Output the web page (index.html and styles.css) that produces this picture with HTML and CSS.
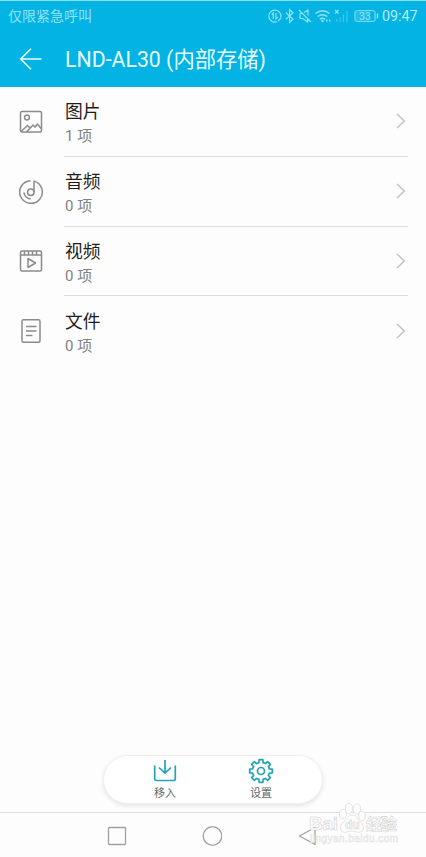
FILE: index.html
```html
<!DOCTYPE html>
<html lang="zh-CN">
<head>
<meta charset="utf-8">
<title>LND-AL30</title>
<link rel="stylesheet" href="styles.css">
</head>
<body>
<div class="screen">
  <header class="header">
    <div class="status">
      <span class="carrier">仅限紧急呼叫</span>
      <svg class="status-icons" width="112" height="16" viewBox="0 0 112 16" fill="none" stroke="currentColor" stroke-width="1.2">
        <path d="M13.700 9.500A6 6 0 1 0 10 13.700M6.300 11V5L4.700 6.800M9 5v6l1.700-1.900M11 13l3-3"/>
        <path d="M19 4.700l7 6.600-3.400 3V1.700l3.400 3-7 6.600"/>
        <path d="M32 2l12 12M33 5.500v5h3l4.500 3.500v-3M37 4.500L41 2v5.500M33 5.500h2"/>
        <path d="M48.500 5.500q7-5.500 14 0M50.700 8.500q4.800-3.700 9.600 0M52.900 11.300q2.600-2 5.200 0" stroke-width="1.500"/>
        <path d="M54.500 13h2M59 12.500h1.500M62 12.500h1.500" stroke-width="1.800"/>
        <path d="M68 2l3.500 3.500M71.500 2L68 5.500"/>
        <path d="M69.500 14v-3M73 14V9M76.500 14V6.500M80 14V3" opacity=".45"/>
        <rect x="88" y="2.700" width="20" height="10.600" rx="1.500" stroke-width="1"/>
        <rect x="89" y="3.700" width="13" height="8.600" fill="currentColor" stroke="none" opacity=".25"/>
        <path d="M110.500 5.500v5" stroke-width="1.500"/>
        <text class="battery" x="98" y="11.800" text-anchor="middle">33</text>
      </svg>
      <span class="clock">09:47</span>
    </div>
    <div class="titlebar">
      <svg class="back" width="24" height="24" viewBox="0 0 24 24" fill="none" stroke="currentColor" stroke-width="1.600"><path d="M22.500 12H2M12 1.700L1.700 12 12 22.300"/></svg>
      <h1 class="title">LND-AL30 (内部存储)</h1>
    </div>
  </header>
  <main class="list">
    <div class="row">
      <svg class="kind" viewBox="0 0 26 26"><rect x="2.500" y="2.500" width="21" height="20.500" rx="1.500"/><circle cx="9" cy="8.500" r="2.400"/><path d="M3 22.500l6.500-6 2.500 2.500M8.500 23l6.500-7 2 2 2.500-3 3.500 4.500"/></svg>
      <div class="body"><div class="text"><div class="name">图片</div><div class="count">1 项</div></div>
      <svg class="chevron" viewBox="0 0 10 16"><path d="M1 1l7.300 7L1 15"/></svg></div>
    </div>
    <div class="row">
      <svg class="kind" viewBox="0 0 26 26"><path d="M12.500 1.700A11.300 11.300 0 1 0 16 2.100V13"/><circle cx="12.800" cy="13.200" r="3.200"/><path d="M6 13.500a7 7 0 0 0 6.800 6.500"/></svg>
      <div class="body"><div class="text"><div class="name">音频</div><div class="count">0 项</div></div>
      <svg class="chevron" viewBox="0 0 10 16"><path d="M1 1l7.300 7L1 15"/></svg></div>
    </div>
    <div class="row">
      <svg class="kind" viewBox="0 0 26 26"><rect x="2.500" y="3" width="21" height="20" rx="1.500"/><path d="M3 7h20M6.500 3v4M10.500 3v4M14.500 3v4M18.500 3v4M10 10.500v9l7.500-4.500z"/></svg>
      <div class="body"><div class="text"><div class="name">视频</div><div class="count">0 项</div></div>
      <svg class="chevron" viewBox="0 0 10 16"><path d="M1 1l7.300 7L1 15"/></svg></div>
    </div>
    <div class="row">
      <svg class="kind" viewBox="0 0 26 26"><rect x="4" y="1.700" width="18" height="22.500" rx="1.500"/><path d="M8 8.500h10.500M8 13h10.500M8 17.500h6.500"/></svg>
      <div class="body last"><div class="text"><div class="name">文件</div><div class="count">0 项</div></div>
      <svg class="chevron" viewBox="0 0 10 16"><path d="M1 1l7.300 7L1 15"/></svg></div>
    </div>
  </main>
  <div class="actions">
    <div class="action">
      <svg width="26" height="26" viewBox="0 0 26 26"><path d="M2.700 7.500V21q0 1.500 1.500 1.500h17.600q1.500 0 1.500-1.500V7.500M13 2v13M7 9.500l6 5.700 6-5.700"/></svg>
      <span>移入</span>
    </div>
    <div class="action">
      <svg width="26" height="26" viewBox="-13 -13 26 26"><path d="M-2.100-8.400L-1.900-11.300H1.900L2.100-8.400 4.450-7.420 6.650-9.330 9.330-6.650 7.420-4.450 8.400-2.100 11.300-1.900V1.900L8.400 2.100 7.420 4.450 9.330 6.650 6.650 9.330 4.450 7.420 2.100 8.400 1.900 11.300H-1.900L-2.100 8.400-4.450 7.420-6.650 9.330-9.330 6.650-7.420 4.450-8.400 2.100-11.300 1.900V-1.900L-8.400-2.100-7.420-4.450-9.330-6.650-6.650-9.330-4.450-7.420Z"/><circle r="3.500"/></svg>
      <span>设置</span>
    </div>
  </div>
  <nav class="nav">
    <svg width="20" height="20" viewBox="0 0 20 20"><rect x="1.500" y="1.500" width="17" height="17" rx=".8"/></svg>
    <svg width="20" height="20" viewBox="0 0 20 20"><circle cx="10.500" cy="10" r="9.300"/></svg>
    <svg width="20" height="20" viewBox="0 0 20 20"><path d="M18 1.500v17L2.500 10z"/></svg>
  </nav>
  <svg class="watermark" width="124" height="62" viewBox="0 0 124 62">
    <g class="mark">
      <ellipse cx="53" cy="19" rx="3.500" ry="4.500"/><ellipse cx="59" cy="13.500" rx="3.800" ry="5.200"/><ellipse cx="67" cy="14" rx="3.800" ry="5.200"/><ellipse cx="72" cy="21" rx="3.300" ry="4.800"/>
      <path d="M62 20c5 0 5 4 8.500 7 6 5 2 12-4 10-4-1-6-1-10 0-7 1.500-8-6-3-10 4-3 4-7 8.500-7z"/>
      <text class="latin" x="19" y="35" textLength="29">Bai</text>
      <text class="du" x="55" y="34">du</text>
      <text class="cjk" x="76" y="35" textLength="31">经验</text>
    </g>
    <text class="site" x="20" y="47" textLength="88">jingyan.baidu.com</text>
  </svg>
</div>
</body>
</html>
```
FILE: styles.css
```css
* { box-sizing: border-box; }
body { margin: 0; background: #fdfdfd; font-family: Roboto, "Noto Sans CJK SC", sans-serif; }
svg { display: block; flex: none; }
.screen { position: relative; width: 426px; height: 857px; display: flex; flex-direction: column; overflow: hidden; }
.header { height: 87px; flex: none; background: #02b3e3; border-top: 1px solid #8cdff2; color: #e8fbff; }
.status { height: 29px; display: flex; align-items: center; padding: 0 8px; color: #91e2f5; }
.carrier { font-size: 14px; line-height: 20px; margin-right: auto; }
.status-icons { margin-right: 3px; }
.battery { font: 10.500px Roboto, sans-serif; fill: currentColor; stroke: none; }
.clock { font-size: 14.300px; line-height: 20px; width: 36px; white-space: nowrap; color: #b5edf9; }
.titlebar { height: 57px; display: flex; align-items: center; padding-left: 19px; }
.title { margin: 3px 0 0 22px; font-size: 21.300px; font-weight: 400; line-height: 28px; }
.list { flex: 1; }
.row { height: 69.800px; display: flex; align-items: center; padding: 0 18px; }
.kind { width: 26px; height: 26px; fill: none; stroke: #8b8b8b; stroke-width: 1.500; stroke-linejoin: round; }
.body { flex: 1; height: 100%; margin-left: 20px; display: flex; align-items: center; justify-content: space-between; border-bottom: 1px solid #dcdcdc; }
.body.last { border-color: transparent; }
.text { padding: 5px 0 0 1px; }
.name { font-size: 17.800px; line-height: 25px; color: #1d1d1d; }
.count { font-size: 15px; line-height: 24px; color: #818181; }
.chevron { width: 10px; height: 16px; margin-right: 2px; fill: none; stroke: #c2c2c2; stroke-width: 1.500; }
.actions { width: 220px; height: 49px; flex: none; margin: 0 0 8px 103px; border-radius: 25px; background: #fff; border: 1px solid #f0f0f0; box-shadow: 0 2px 4px #0000001a; display: flex; padding: 2px 13px 0; }
.action { flex: 1; display: flex; flex-direction: column; align-items: center; font-size: 11px; line-height: 16px; color: #666; }
.action svg { fill: none; stroke: #20a5b8; stroke-width: 1.700; stroke-linejoin: round; }
.action span { margin-top: 2px; }
.nav { height: 45px; flex: none; border-top: 1px solid #dedede; display: flex; align-items: center; gap: 75px; padding: 2px 0 0 107px; }
.nav svg { fill: none; stroke: #a0a0a0; stroke-width: 1.300; stroke-linejoin: round; }
.watermark { position: absolute; left: 290px; top: 795px; }
.mark { fill: #fdfdfd; stroke: #d4d4d4; stroke-width: .6; }
.latin { font: 700 19px "Liberation Sans", sans-serif; }
.du { font: 700 12px "Liberation Sans", sans-serif; }
.cjk { font: 700 16px "Noto Sans CJK SC", sans-serif; }
.site { font: 10px "Liberation Sans", sans-serif; fill: #fdfdfd; stroke: #e2e2e2; stroke-width: .5; }
```
